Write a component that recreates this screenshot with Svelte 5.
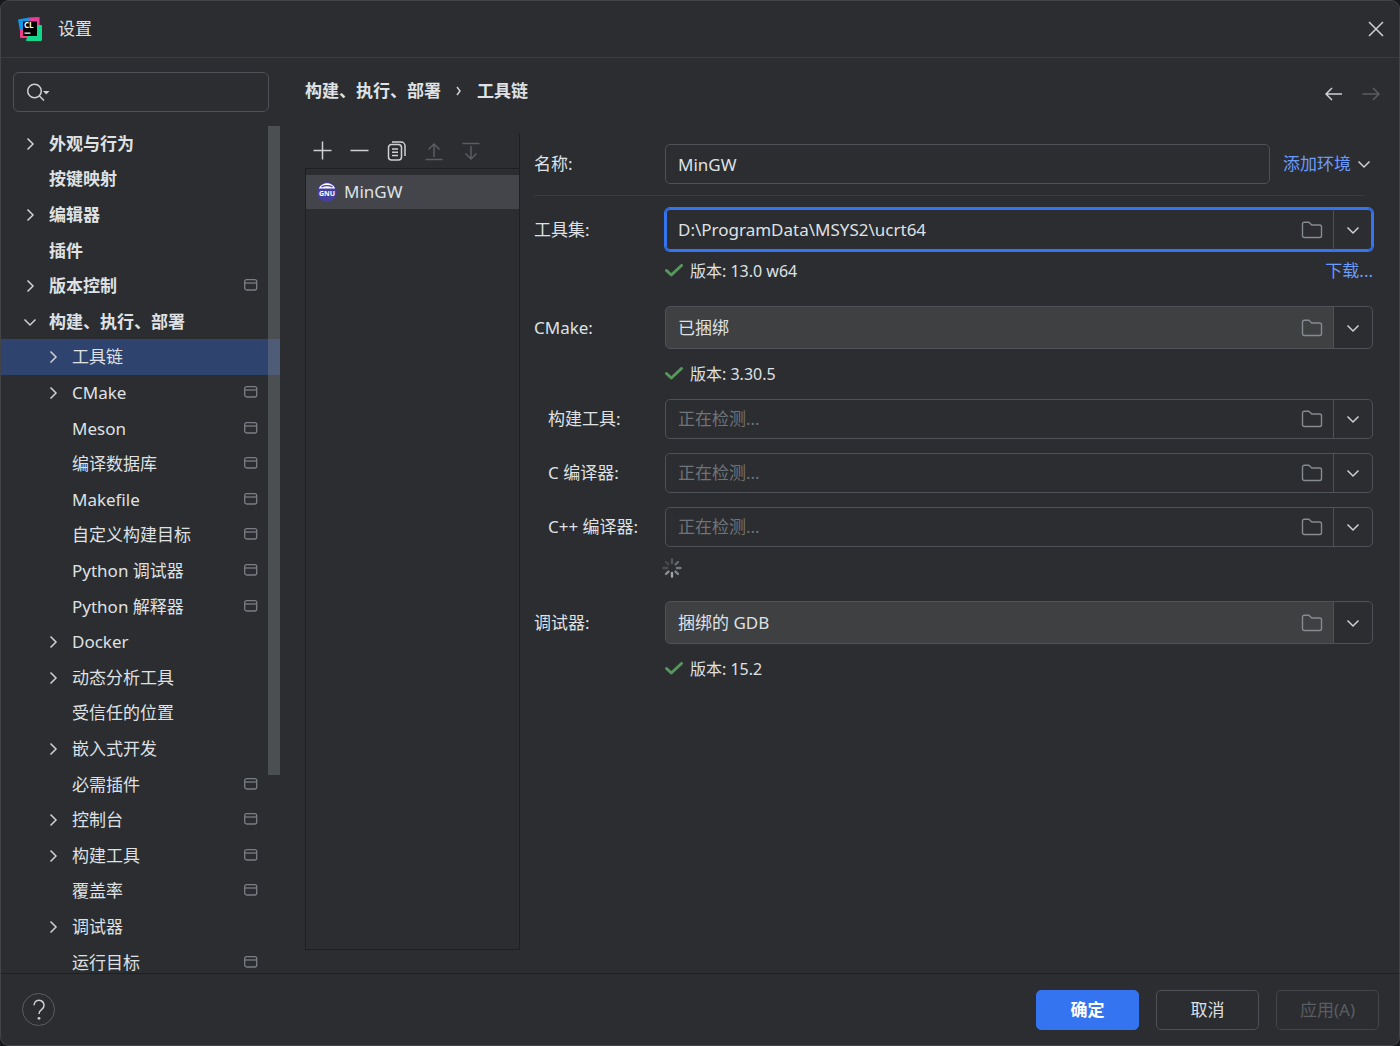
<script>
  const tree = [
    { name: '外观与行为', level: 0, arrow: 'right' },
    { name: '按键映射', level: 0 },
    { name: '编辑器', level: 0, arrow: 'right' },
    { name: '插件', level: 0 },
    { name: '版本控制', level: 0, arrow: 'right', project: true },
    { name: '构建、执行、部署', level: 0, arrow: 'down' },
    { name: '工具链', level: 1, arrow: 'right' },
    { name: 'CMake', level: 1, arrow: 'right', project: true },
    { name: 'Meson', level: 1, project: true },
    { name: '编译数据库', level: 1, project: true },
    { name: 'Makefile', level: 1, project: true },
    { name: '自定义构建目标', level: 1, project: true },
    { name: 'Python 调试器', level: 1, project: true },
    { name: 'Python 解释器', level: 1, project: true },
    { name: 'Docker', level: 1, arrow: 'right' },
    { name: '动态分析工具', level: 1, arrow: 'right' },
    { name: '受信任的位置', level: 1 },
    { name: '嵌入式开发', level: 1, arrow: 'right' },
    { name: '必需插件', level: 1, project: true },
    { name: '控制台', level: 1, arrow: 'right', project: true },
    { name: '构建工具', level: 1, arrow: 'right', project: true },
    { name: '覆盖率', level: 1, project: true },
    { name: '调试器', level: 1, arrow: 'right' },
    { name: '运行目标', level: 1, project: true }
  ];

  const spokes = [
    { angle: 0, opacity: 0.3 },
    { angle: 45, opacity: 0.45 },
    { angle: 90, opacity: 0.55 },
    { angle: 135, opacity: 0.65 },
    { angle: 180, opacity: 0.85 },
    { angle: 225, opacity: 0.7 },
    { angle: 270, opacity: 0.25 },
    { angle: 315, opacity: 0.2 }
  ];

  let selected = $state('工具链');
  let query = $state('');
  let name = $state('MinGW');
  let toolset = $state('D:\\ProgramData\\MSYS2\\ucrt64');
</script>

{#snippet chevron(dir)}
  <svg class="chevron" width="14" height="14" viewBox="0 0 14 14">
    <path d={dir === 'down' ? 'M1.5 4.5 7 10l5.5-5.5' : 'M4.5 1.5 10 7l-5.5 5.5'} />
  </svg>
{/snippet}

{#snippet combo(id, value, kind, placeholder)}
  <div class="combo {kind}">
    {#if kind === 'focused'}
      <input {id} type="text" bind:value={toolset} />
    {:else}
      <input {id} type="text" {value} {placeholder} readonly={kind === 'bundled'} />
    {/if}
    <button class="browse" aria-label="浏览">
      <svg width="22" height="18" viewBox="0 0 22 18">
        <path d="M1.500 14.500V3a1.800 1.800 0 0 1 1.800-1.800h4.500l3 2.800h7.900A1.800 1.800 0 0 1 20.500 5.800v8.900a1.800 1.800 0 0 1-1.800 1.800H3.300A1.800 1.800 0 0 1 1.500 14.700z" />
      </svg>
    </button>
    <button class="drop" aria-label="展开">{@render chevron('down')}</button>
  </div>
{/snippet}

{#snippet status(version)}
  <p class="status">
    <svg width="18" height="14" viewBox="0 0 18 14"><path d="M1.500 6.500 6.300 11 16.500 1.500" /></svg>
    <span>版本: {version}</span>
  </p>
{/snippet}

<div class="dialog">
  <header class="titlebar">
    <svg class="logo" width="24" height="24" viewBox="0 0 24 24">
      <defs>
        <linearGradient id="edge" x1="0" y1="0" x2="1" y2="0">
          <stop offset="0.45" stop-color="#1196e8" />
          <stop offset="0.6" stop-color="#ed3d97" />
        </linearGradient>
      </defs>
      <path d="M0 2.500 11 .5 21.500 0v9L2.500 17z" fill="url(#edge)" />
      <path d="M2 12.500v7.500q0 1 1 1h13.500v-8z" fill="#ed3d8c" />
      <path d="M19 8h4q1 0 1 1v13.500q0 1.500-1.500 1.500H9q-1 0-1-1l2-4h9z" fill="#14d68a" />
      <path d="M5 4.500h14v14.500H5z" fill="#000" />
      <text x="6" y="11">CL</text>
      <path d="M6.500 15.500h6v1.300H6.500z" fill="#fff" />
    </svg>
    <h1>设置</h1>
    <button class="close" aria-label="关闭">
      <svg width="16" height="16" viewBox="0 0 16 16"><path d="M1 1l14 14M15 1 1 15" /></svg>
    </button>
  </header>

  <div class="content">
    <aside class="sidebar">
      <label class="search">
        <svg width="24" height="20" viewBox="0 0 24 20">
          <circle cx="8.500" cy="9" r="6.800" />
          <path d="m13.500 14 4.500 4.500" />
          <path class="caret" d="M17 9h6.500l-3.250 3.500z" />
        </svg>
        <input type="text" bind:value={query} aria-label="搜索" />
      </label>

      <nav class="tree-view">
        <ul class="tree">
          {#each tree as item}
            <li class="level-{item.level}" class:selected={item.name === selected}>
              <button onclick={() => (selected = item.name)}>
                <span class="arrow">
                  {#if item.arrow}{@render chevron(item.arrow)}{/if}
                </span>
                <span class="name">{item.name}</span>
                {#if item.project}
                  <svg class="project" width="14" height="14" viewBox="0 0 14 14">
                    <rect x="0.700" y="0.700" width="12" height="10.300" rx="2" />
                    <path d="M1 4h11.500" />
                  </svg>
                {/if}
              </button>
            </li>
          {/each}
        </ul>
        <div class="scrollbar"></div>
      </nav>
    </aside>

    <main>
      <div class="heading">
        <h2>
          <span>构建、执行、部署</span>
          <svg width="6" height="10" viewBox="0 0 6 10"><path d="M1 1l3 4-3 4" /></svg>
          <span>工具链</span>
        </h2>
        <div class="history">
          <button aria-label="后退">
            <svg width="18" height="14" viewBox="0 0 18 14"><path d="M17 7H1M7 1 1 7l6 6" /></svg>
          </button>
          <button aria-label="前进" disabled>
            <svg width="18" height="14" viewBox="0 0 18 14"><path d="M.5 7H17M11 1l6 6-6 6" /></svg>
          </button>
        </div>
      </div>

      <div class="panes">
        <section class="toolchains">
          <div class="toolbar">
            <button aria-label="添加">
              <svg width="20" height="20" viewBox="0 0 20 20"><path d="M9.500 .5v18M.5 9.500h18" /></svg>
            </button>
            <button aria-label="移除">
              <svg width="20" height="20" viewBox="0 0 20 20"><path d="M.5 9.500h18" /></svg>
            </button>
            <button aria-label="复制">
              <svg width="20" height="20" viewBox="0 0 20 20">
                <rect x="1.500" y="3.500" width="13" height="15.500" rx="3" />
                <path d="M5 1h9a4 4 0 0 1 4 4v10M5 8h6M5 11.300h6M5 14.600h6" />
              </svg>
            </button>
            <button aria-label="上移" disabled>
              <svg width="20" height="20" viewBox="0 0 20 20"><path d="M10 16V3M4.500 8.500 10 3l5.500 5.500M1.500 18.500h17" /></svg>
            </button>
            <button aria-label="下移" disabled>
              <svg width="20" height="20" viewBox="0 0 20 20"><path d="M10 5v13M4.500 12.500 10 18l5.500-5.500M1.500 2.500h17" /></svg>
            </button>
          </div>
          <ul class="list">
            <li>
              <svg class="gnu" width="20" height="20" viewBox="0 0 20 20">
                <circle cx="10" cy="10" r="10" fill="#463f9e" />
                <path d="M1.800 6.500C3.500 2.600 7 1.200 10 1.200s6.500 1.400 8.200 5.300z" fill="#fff" />
                <path d="M4.500 4.800q5.500-2.400 11 0" stroke="#463f9e" stroke-width="1.300" fill="none" />
                <text x="10" y="14" text-anchor="middle">GNU</text>
              </svg>
              <span>MinGW</span>
            </li>
          </ul>
        </section>

        <form onsubmit={(e) => e.preventDefault()}>
          <div class="row">
            <label for="name">名称:</label>
            <div class="name-field">
              <input id="name" type="text" bind:value={name} />
              <button class="link">添加环境 {@render chevron('down')}</button>
            </div>
          </div>
          <hr />
          <div class="row">
            <label for="toolset">工具集:</label>
            {@render combo('toolset', toolset, 'focused')}
          </div>
          <div class="under first">
            {@render status('13.0 w64')}
            <a href="#download">下载...</a>
          </div>

          <div class="row">
            <label for="cmake">CMake:</label>
            {@render combo('cmake', '已捆绑', 'bundled')}
          </div>
          <div class="under">{@render status('3.30.5')}</div>

          <div class="detected">
            <div class="row">
              <label for="build">构建工具:</label>
              {@render combo('build', '', 'empty', '正在检测...')}
            </div>
            <div class="row">
              <label for="cc">C 编译器:</label>
              {@render combo('cc', '', 'empty', '正在检测...')}
            </div>
            <div class="row">
              <label for="cxx">C++ 编译器:</label>
              {@render combo('cxx', '', 'empty', '正在检测...')}
            </div>
          </div>
          <svg class="spinner" width="20" height="20" viewBox="0 0 20 20">
            {#each spokes as spoke}
              <path d="M10 1.500v3.500" transform="rotate({spoke.angle} 10 10)" opacity={spoke.opacity} />
            {/each}
          </svg>

          <div class="row">
            <label for="debugger">调试器:</label>
            {@render combo('debugger', '捆绑的 GDB', 'bundled')}
          </div>
          <div class="under">{@render status('15.2')}</div>
        </form>
      </div>
    </main>
  </div>

  <footer>
    <button class="help" aria-label="帮助">
      <svg width="14" height="22" viewBox="0 0 14 22">
        <path d="M2 6.200a5 5 0 1 1 8 4C8 11.700 7 12.500 7 15" />
        <circle cx="7" cy="19.300" r="1.400" />
      </svg>
    </button>
    <div class="actions">
      <button class="primary">确定</button>
      <button>取消</button>
      <button disabled>应用(A)</button>
    </div>
  </footer>
</div>

<style>
  :global(body) {
    background: #17181a;
  }

  .dialog {
    box-sizing: border-box;
    height: 100vh;
    display: flex;
    flex-direction: column;
    border: 1px solid #424447;
    border-radius: 9px;
    overflow: hidden;
    background: #2b2d30;
    color: #dfe1e5;
    font: 17px/24px "Noto Sans", "Noto Sans CJK SC", sans-serif;
  }

  button,
  input {
    box-sizing: border-box;
    margin: 0;
    padding: 0;
    border: none;
    outline: none;
    background: none;
    color: inherit;
    font: inherit;
  }

  h1,
  h2,
  p,
  ul {
    margin: 0;
    padding: 0;
    list-style: none;
    font-size: inherit;
  }

  svg {
    flex: none;
    fill: none;
    stroke: #ced0d6;
    stroke-width: 1.5px;
  }

  .titlebar {
    display: flex;
    align-items: center;
    gap: 16px;
    height: 56px;
    padding: 0 15px 0 17px;
    border-bottom: 1px solid #3a3c40;
  }

  .titlebar h1 {
    flex: 1;
    font-weight: 400;
  }

  .logo,
  .gnu {
    stroke: none;
  }

  .logo text {
    fill: #fff;
    font: bold 8px "Open Sans", sans-serif;
  }

  .close {
    display: flex;
  }

  .content {
    flex: 1;
    min-height: 0;
    display: flex;
  }

  .sidebar {
    width: 279px;
    flex: none;
    display: flex;
    flex-direction: column;
  }

  .search {
    display: flex;
    align-items: center;
    gap: 6px;
    height: 38px;
    margin: 14px 11px 14px 12px;
    padding: 0 12px;
    border: 1px solid #4e5157;
    border-radius: 6px;
  }

  .search input {
    flex: 1;
    min-width: 0;
  }

  .search .caret {
    fill: #ced0d6;
    stroke: none;
  }

  .tree-view {
    position: relative;
    flex: 1;
    min-height: 0;
    overflow: hidden;
  }

  .tree li {
    height: 36px;
  }

  .tree li:nth-child(5n + 1),
  .tree li:nth-child(5n + 4) {
    height: 35px;
  }

  .tree button {
    display: flex;
    align-items: center;
    width: 100%;
    height: 100%;
    padding: 0 22px;
    text-align: left;
  }

  .tree .level-0 {
    font-weight: 700;
  }

  .tree .level-1 button {
    padding-left: 45px;
  }

  .tree .selected {
    background: #2e436e;
  }

  .arrow {
    display: flex;
    width: 14px;
    margin-right: 12px;
  }

  .name {
    flex: 1;
  }

  .project {
    stroke: #7b7e85;
    stroke-width: 1.3px;
  }

  .scrollbar {
    position: absolute;
    top: 0;
    right: 0;
    width: 12px;
    height: 649px;
    background: rgba(128, 130, 132, 0.4);
  }

  main {
    flex: 1;
    min-width: 0;
    display: flex;
    flex-direction: column;
    padding-left: 25px;
  }

  .heading {
    display: flex;
    justify-content: space-between;
    align-items: center;
    height: 66px;
    margin-bottom: 9px;
  }

  .heading h2 {
    display: flex;
    align-items: center;
    gap: 15px;
    font-weight: 700;
  }

  .history {
    display: flex;
    gap: 19px;
    padding: 6px 19px 0 0;
  }

  .history button {
    display: flex;
  }

  button:disabled svg {
    stroke: #5a5d63;
  }

  .panes {
    flex: 1;
    min-height: 0;
    display: flex;
    padding-bottom: 23px;
  }

  .toolchains {
    box-sizing: border-box;
    width: 215px;
    flex: none;
    display: flex;
    flex-direction: column;
    border-right: 1px solid #1e1f22;
  }

  .toolbar {
    display: flex;
    align-items: center;
    gap: 17px;
    height: 35px;
    padding-left: 8px;
  }

  .toolbar button {
    display: flex;
  }

  .list {
    flex: 1;
    padding-top: 6px;
    border: 1px solid #1e1f22;
    border-right: none;
  }

  .list li {
    display: flex;
    align-items: center;
    gap: 7px;
    height: 34px;
    padding-left: 11px;
    background: #43454a;
  }

  .gnu text {
    fill: #fff;
    font: bold 7px "Open Sans", sans-serif;
  }

  form {
    flex: 1;
    min-width: 0;
    padding: 11px 26px 0 14px;
  }

  .row {
    display: grid;
    grid-template-columns: 131px 1fr;
    align-items: center;
  }

  .name-field {
    display: flex;
    gap: 13px;
  }

  .name-field input {
    flex: 1;
    min-width: 0;
    height: 40px;
    padding: 0 12px;
    border: 1px solid #4e5157;
    border-radius: 5px;
  }

  .link {
    display: flex;
    align-items: center;
    gap: 6px;
    padding-right: 2px;
    color: #6b9bfa;
  }

  hr {
    height: 1px;
    margin: 11px 9px 12px 0;
    border: none;
    background: #393b40;
  }

  .combo {
    box-sizing: border-box;
    display: flex;
    height: 40px;
    border: 1px solid #4e5157;
    border-radius: 5px;
  }

  .combo.focused,
  .combo.bundled {
    height: 43px;
  }

  .combo.focused {
    border-color: #3574f0;
    box-shadow: 0 0 0 1px #3574f0, inset 0 0 0 1px #3574f0;
  }

  .combo.bundled {
    background: linear-gradient(to left, #2b2d30 38px, #3e4042 38px);
  }

  .combo input {
    flex: 1;
    min-width: 0;
    padding-left: 12px;
  }

  .combo input::placeholder {
    color: #6f737a;
    opacity: 1;
  }

  .browse {
    display: flex;
    align-items: center;
    padding: 0 10px;
  }

  .browse svg {
    stroke: #868a91;
    stroke-width: 1.4px;
  }

  .drop {
    display: flex;
    align-items: center;
    justify-content: center;
    width: 39px;
    border-left: 1px solid #4e5157;
  }

  .under {
    display: flex;
    justify-content: space-between;
    margin: 15px 0 15px 131px;
    line-height: 20px;
  }

  .under.first {
    margin: 10px 0 25px 131px;
  }

  .status {
    display: flex;
    align-items: center;
    gap: 7px;
    font-size: 16px;
  }

  .status svg {
    stroke: #57965c;
    stroke-width: 3px;
    stroke-linecap: round;
    stroke-linejoin: round;
  }

  a {
    color: #6b9bfa;
    text-decoration: none;
  }

  .detected {
    display: grid;
    gap: 14px;
  }

  .detected label {
    padding-left: 14px;
  }

  .spinner {
    display: block;
    margin: 11px 0 23px 128px;
    stroke: #b4b8bf;
    stroke-width: 2.4px;
    stroke-linecap: round;
  }

  footer {
    display: flex;
    align-items: center;
    justify-content: space-between;
    height: 71px;
    padding: 0 20px 0 21px;
    border-top: 1px solid #1e1f22;
  }

  .help {
    display: flex;
    align-items: center;
    justify-content: center;
    width: 33px;
    height: 33px;
    border: 1px solid #5a5d63;
    border-radius: 50%;
  }

  .help circle {
    fill: #ced0d6;
    stroke: none;
  }

  .actions {
    display: flex;
    gap: 17px;
  }

  .actions button {
    width: 103px;
    height: 40px;
    border: 1px solid #4e5157;
    border-radius: 5px;
  }

  .actions .primary {
    border-color: #3574f0;
    background: #3574f0;
    color: #fff;
    font-weight: 700;
  }

  .actions button:disabled {
    border-color: #43454a;
    color: #5a5d63;
  }
</style>
